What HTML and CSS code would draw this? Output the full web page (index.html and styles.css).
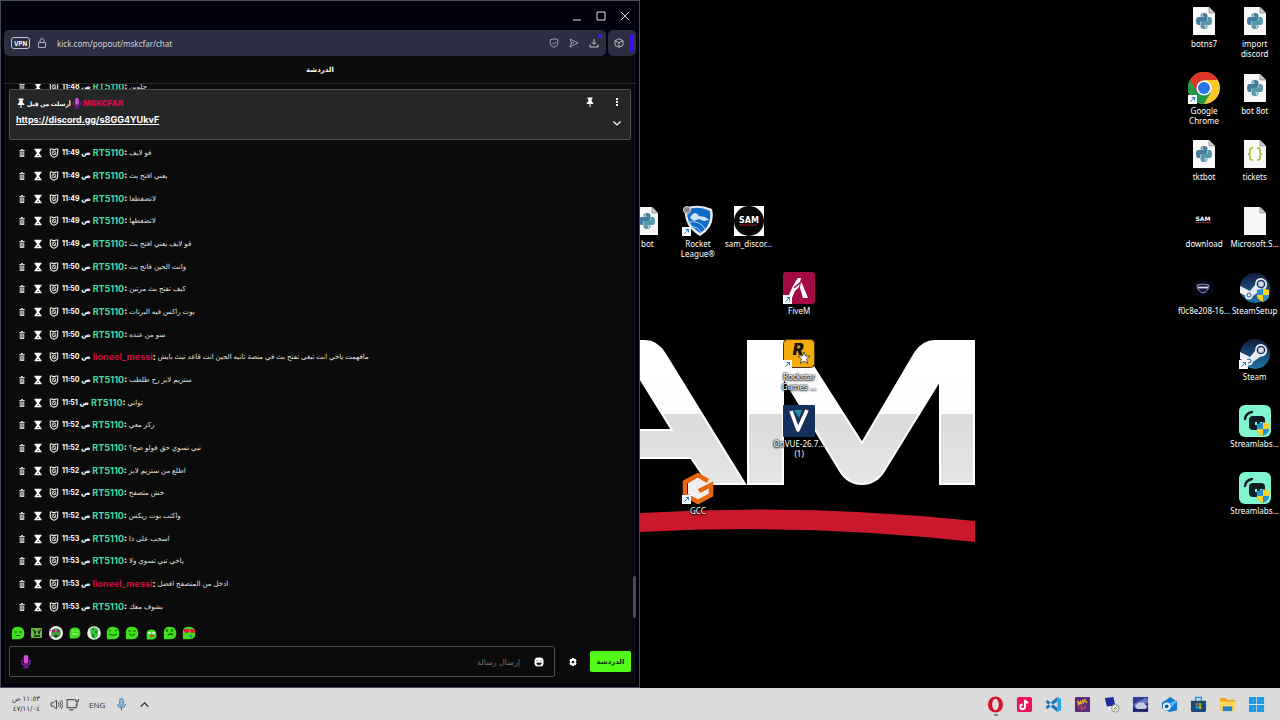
FILE: index.html
```
<!DOCTYPE html>
<html lang="ar">
<head>
    <meta charset="UTF-8">
    <meta name="viewport" content="width=device-width, initial-scale=1.0">
    <title>الدردشة</title>
    <link rel="stylesheet" href="styles.css">
</head>
<body>
    <svg class="defs" aria-hidden="true">
        <symbol id="trash" viewBox="0 0 10 10"><path d="M2.2 2h5.6v1.1H2.2zM4 1h2v1H4zM2.7 3.6h4.6V9H2.7z" fill="#c9c9c9"/><path d="M3.4 5h3.2M3.4 6.8h3.2" stroke="#333" stroke-width=".7"/></symbol>
        <symbol id="glass" viewBox="0 0 10 10"><path d="M1.5.8h7v1.4h-.8Q7.500 4 5.900 5 7.500 6 7.700 7.800h.8v1.400h-7V7.800h.8Q2.500 6 4.100 5 2.500 4 2.300 2.200h-.8z" fill="#fff"/><path d="M4 8l1-1.400L6 8z" fill="#222"/></symbol>
        <symbol id="ban" viewBox="0 0 10 10"><path d="M1.300 1h2l.6.6h2.200l.6-.6h2v4.200Q8.700 7.900 5 9.300 1.300 7.900 1.300 5.200z" fill="none" stroke="#eee" stroke-width="1.100"/><circle cx="5" cy="4.900" r="1.900" fill="none" stroke="#eee" stroke-width=".9"/><path d="M3.700 3.600l2.600 2.600" stroke="#eee" stroke-width=".8"/></symbol>
        <symbol id="pin" viewBox="0 0 10 10"><path d="M2.500.5h5v1.200l-.8.3v2.500L8.300 6v1H5.500v3h-1V7H1.700V6l1.600-1.500V2l-.8-.3z" fill="#fff"/></symbol>
        <symbol id="mic" viewBox="0 0 12 16"><path d="M1.500 6v2q0 4 4.500 4t4.500-4V6M6 12v3M3 14.500h6" fill="none" stroke="#7d1aa8" stroke-width="1.600"/><rect x="3.500" y="1" width="5" height="9.500" rx="2.500" fill="#d848e0"/></symbol>
        <symbol id="arrow" viewBox="0 0 10 10"><path d="M0 0h10v10H0z" fill="#fff"/><path d="M2.500 7.500L7 3M4 2.700h3.300V6" fill="none" stroke="#1976c5" stroke-width="1.100"/></symbol>
        <symbol id="shield" viewBox="0 0 16 16"><path d="M8 0q3 2 7 2.200V8q0 5-7 8z" fill="#fbd21f"/><path d="M8 0Q5 2 1 2.200V8q0 5 7 8z" fill="#2791d0"/><path d="M8 8h7q0 5-7 8z" fill="#2791d0"/><path d="M1 8h7v8Q1 13 1 8z" fill="#fbd21f"/></symbol>
        <symbol id="file" viewBox="0 0 24 30"><path d="M1 1h16l6 6v22H1z" fill="#f8f8f8"/><path d="M17 1v6h6z" fill="#c9cdd2" stroke="#777" stroke-width=".6"/></symbol>
        <symbol id="snake" viewBox="0 0 16 16"><path d="M8 0q3.500 0 3.500 2.500V6q0 2-2 2h-3Q4 8 4 10.500V12H2.500Q0 12 0 8t2.500-4H8v-.6H4.500V2.500Q4.500 0 8 0z" fill="#427d9c"/><path d="M8 16q-3.500 0-3.500-2.500V10q0-2 2-2h3Q12 8 12 5.500V4h1.500Q16 4 16 8t-2.500 4H8v.6h3.500v.9Q11.500 16 8 16z" fill="#5797ae"/><circle cx="6.300" cy="2" r=".8" fill="#fff"/><circle cx="9.700" cy="14" r=".8" fill="#fff"/></symbol>
        <symbol id="pyfile" viewBox="0 0 32 32"><use href="#file" x="4" y="1" width="24" height="30"/><use href="#snake" x="8" y="8" width="16" height="16"/></symbol>
        <symbol id="streamlabs" viewBox="0 0 32 32"><rect width="32" height="32" rx="6" fill="#80f5d2"/><path d="M6 14q1-6 7-7" fill="none" stroke="#111c23" stroke-width="2.300" stroke-linecap="round"/><rect x="10" y="11" width="16" height="14" rx="4" fill="#111c23"/><path d="M17 17v3M22 17v3" stroke="#80f5d2" stroke-width="2"/><use href="#shield" x="17" y="17" width="14" height="14"/></symbol>
        <symbol id="steam" viewBox="0 0 32 32"><circle cx="16" cy="16" r="15" fill="url(#steamBlue)"/><path d="M1 14l10 5 5-6q0-7 6-7 6 1 6 6.500T21 19l-7 5q-1 4-5 3.500-3-1-3-4L1 21z" fill="#e9edf3"/><circle cx="22" cy="12" r="3.600" fill="#d5dae3" stroke="#23335f" stroke-width="1.500"/><circle cx="10" cy="23" r="2" fill="none" stroke="#2b5b8d"/></symbol>
        <symbol id="blob" viewBox="0 0 14 14"><path d="M.8 6Q1 .7 7 .7T13.300 7 7 13.300H1.200Q.6 10 .8 6z" fill="#3fe01c"/></symbol>
        <linearGradient id="steamBlue" x1="0" y1="0" x2="0" y2="1"><stop offset="0" stop-color="#151a3d"/><stop offset="1" stop-color="#1c75a8"/></linearGradient>
    </svg>

    <main class="desktop">
        <section class="window">
            <div class="titlebar">
                <button aria-label="تصغير"><svg viewBox="0 0 10 10"><path d="M1 9h8" stroke="#ddd"/></svg></button>
                <button aria-label="تكبير"><svg viewBox="0 0 10 10"><path d="M1 1h8v8H1z" fill="none" stroke="#ddd"/></svg></button>
                <button aria-label="إغلاق"><svg viewBox="0 0 10 10"><path d="M1 1l8 8M9 1L1 9" stroke="#ddd"/></svg></button>
            </div>
            <div class="toolbar">
                <div class="address">
                    <button class="vpn">VPN</button>
                    <svg class="lock" viewBox="0 0 10 10"><path d="M1.500 4.500h7v5h-7zM3 4.500V3q0-2.500 2-2.500T7 3v1.500" fill="none" stroke="#b9bbc8" stroke-width=".9"/></svg>
                    <input class="url" aria-label="العنوان" value="kick.com/popout/mskcfar/chat">
                    <button aria-label="الحماية"><svg viewBox="0 0 10 10"><path d="M5 .8l3.800 1V5Q8.800 8 5 9.400 1.200 8 1.200 5V1.800zM3.200 4.800l1.400 1.400L7 3.800" fill="none" stroke="#b9bbc8" stroke-width=".8"/></svg></button>
                    <button aria-label="إرسال"><svg viewBox="0 0 10 10"><path d="M1 1l8 4-8 4 1.500-4zM2.500 5H5" fill="none" stroke="#b9bbc8" stroke-width=".8"/></svg></button>
                    <button class="downloads" aria-label="التنزيلات"><svg viewBox="0 0 10 10"><path d="M5 1v5M3 4.300l2 2 2-2M1 6.500V9h8V6.500" fill="none" stroke="#d5d6df" stroke-width=".9"/></svg></button>
                </div>
                <button class="cube" aria-label="الإضافات"><svg viewBox="0 0 10 10"><path d="M5 .7l4 2v4.600l-4 2-4-2V2.700zM1 2.700l4 2 4-2M5 4.700v4.600" fill="none" stroke="#d5d6df" stroke-width=".8"/></svg></button>
            </div>

            <div class="chat">
                <h1 class="chat-title">الدردشة</h1>
                <div class="clipped">
                    <div class="message"><svg><use href="#trash"/></svg><svg><use href="#glass"/></svg><svg><use href="#ban"/></svg><time>11:48 ص</time><b>RT5110<i>:</i></b><bdi>حلوين</bdi></div>
                </div>
                <div class="pinned">
                    <div class="pinned-body">
                        <div class="pinned-by"><svg><use href="#pin"/></svg><bdi>أرسلت من قِبل</bdi><svg class="mic"><use href="#mic"/></svg><b>MSKCFAR</b></div>
                        <a href="https://discord.gg/s8GG4YUkvF">https://discord.gg/s8GG4YUkvF</a>
                    </div>
                    <div class="pinned-actions">
                        <button aria-label="إلغاء التثبيت"><svg><use href="#pin"/></svg></button>
                        <button aria-label="المزيد"><svg viewBox="0 0 10 10"><path d="M4 1h2v2H4zM4 4h2v2H4zM4 7h2v2H4z" fill="#fff"/></svg></button>
                        <button class="expand" aria-label="توسيع"><svg viewBox="0 0 10 10"><path d="M1.500 3.500L5 7l3.500-3.500" fill="none" stroke="#fff" stroke-width="1.200"/></svg></button>
                    </div>
                </div>

                <div class="messages">
                    <div class="message"><svg><use href="#trash"/></svg><svg><use href="#glass"/></svg><svg><use href="#ban"/></svg><time>11:49 ص</time><b>RT5110<i>:</i></b><bdi>قو لايف</bdi></div>
                    <div class="message"><svg><use href="#trash"/></svg><svg><use href="#glass"/></svg><svg><use href="#ban"/></svg><time>11:49 ص</time><b>RT5110<i>:</i></b><bdi>يعني افتح بث</bdi></div>
                    <div class="message"><svg><use href="#trash"/></svg><svg><use href="#glass"/></svg><svg><use href="#ban"/></svg><time>11:49 ص</time><b>RT5110<i>:</i></b><bdi>لاتضغطعا</bdi></div>
                    <div class="message"><svg><use href="#trash"/></svg><svg><use href="#glass"/></svg><svg><use href="#ban"/></svg><time>11:49 ص</time><b>RT5110<i>:</i></b><bdi>لاتضغطها</bdi></div>
                    <div class="message"><svg><use href="#trash"/></svg><svg><use href="#glass"/></svg><svg><use href="#ban"/></svg><time>11:49 ص</time><b>RT5110<i>:</i></b><bdi>قو لايف يعني افتح بث</bdi></div>
                    <div class="message"><svg><use href="#trash"/></svg><svg><use href="#glass"/></svg><svg><use href="#ban"/></svg><time>11:50 ص</time><b>RT5110<i>:</i></b><bdi>وانت الحين فاتح بث</bdi></div>
                    <div class="message"><svg><use href="#trash"/></svg><svg><use href="#glass"/></svg><svg><use href="#ban"/></svg><time>11:50 ص</time><b>RT5110<i>:</i></b><bdi>كيف تفتح بث مرتين</bdi></div>
                    <div class="message"><svg><use href="#trash"/></svg><svg><use href="#glass"/></svg><svg><use href="#ban"/></svg><time>11:50 ص</time><b>RT5110<i>:</i></b><bdi>بوت راكس فيه البرتات</bdi></div>
                    <div class="message"><svg><use href="#trash"/></svg><svg><use href="#glass"/></svg><svg><use href="#ban"/></svg><time>11:50 ص</time><b>RT5110<i>:</i></b><bdi>سو من عنده</bdi></div>
                    <div class="message"><svg><use href="#trash"/></svg><svg><use href="#glass"/></svg><svg><use href="#ban"/></svg><time>11:50 ص</time><b class="red">lioneel_messi<i>:</i></b><bdi>مافهمت ياخي انت تبغى تفتح بث في منصة ثانيه الحين انت قاعد تبث بايش</bdi></div>
                    <div class="message"><svg><use href="#trash"/></svg><svg><use href="#glass"/></svg><svg><use href="#ban"/></svg><time>11:50 ص</time><b>RT5110<i>:</i></b><bdi>ستريم لابز رح طلطب</bdi></div>
                    <div class="message"><svg><use href="#trash"/></svg><svg><use href="#glass"/></svg><svg><use href="#ban"/></svg><time>11:51 ص</time><b>RT5110<i>:</i></b><bdi>ثواني</bdi></div>
                    <div class="message"><svg><use href="#trash"/></svg><svg><use href="#glass"/></svg><svg><use href="#ban"/></svg><time>11:52 ص</time><b>RT5110<i>:</i></b><bdi>ركز معي</bdi></div>
                    <div class="message"><svg><use href="#trash"/></svg><svg><use href="#glass"/></svg><svg><use href="#ban"/></svg><time>11:52 ص</time><b>RT5110<i>:</i></b><bdi>تبي تسوي حق فولو صح؟</bdi></div>
                    <div class="message"><svg><use href="#trash"/></svg><svg><use href="#glass"/></svg><svg><use href="#ban"/></svg><time>11:52 ص</time><b>RT5110<i>:</i></b><bdi>اطلع من ستريم لابز</bdi></div>
                    <div class="message"><svg><use href="#trash"/></svg><svg><use href="#glass"/></svg><svg><use href="#ban"/></svg><time>11:52 ص</time><b>RT5110<i>:</i></b><bdi>خش متصفح</bdi></div>
                    <div class="message"><svg><use href="#trash"/></svg><svg><use href="#glass"/></svg><svg><use href="#ban"/></svg><time>11:52 ص</time><b>RT5110<i>:</i></b><bdi>واكتب بوت ريكس</bdi></div>
                    <div class="message"><svg><use href="#trash"/></svg><svg><use href="#glass"/></svg><svg><use href="#ban"/></svg><time>11:53 ص</time><b>RT5110<i>:</i></b><bdi>اسحب على ذا</bdi></div>
                    <div class="message"><svg><use href="#trash"/></svg><svg><use href="#glass"/></svg><svg><use href="#ban"/></svg><time>11:53 ص</time><b>RT5110<i>:</i></b><bdi>ياخي تبي تسوي ولا</bdi></div>
                    <div class="message"><svg><use href="#trash"/></svg><svg><use href="#glass"/></svg><svg><use href="#ban"/></svg><time>11:53 ص</time><b class="red">lioneel_messi<i>:</i></b><bdi>ادخل من المتصفح افضل</bdi></div>
                    <div class="message"><svg><use href="#trash"/></svg><svg><use href="#glass"/></svg><svg><use href="#ban"/></svg><time>11:53 ص</time><b>RT5110<i>:</i></b><bdi>بشوف معك</bdi></div>
                    <span class="thumb"></span>
                </div>

                <div class="emotes">
                    <button aria-label="emote"><svg viewBox="0 0 14 14"><use href="#blob"/><path d="M3 6h3M8 6h3M5 9.500h4" stroke="#145c0a"/></svg></button>
                    <button aria-label="emote"><svg viewBox="0 0 14 14"><rect x="1" y="2" width="11" height="10" rx="1" fill="#67b743"/><path d="M3 4l3 2M11 4L8 6M4 7h2M8 7h2M4 10h6" stroke="#10250a" stroke-width="1.400"/></svg></button>
                    <button aria-label="emote"><svg viewBox="0 0 14 14"><circle cx="7" cy="7" r="7" fill="#eee"/><circle cx="7" cy="7" r="4.800" fill="#38a737"/><path d="M3 5h3M8 5h3" stroke="#c2188e" stroke-width="2.400"/><circle cx="7" cy="10" r="1.500" fill="#333"/><path d="M0 3l2 2M0 11l3-1" stroke="#d52a9c"/></svg></button>
                    <button aria-label="emote"><svg viewBox="0 0 14 14"><use href="#blob" x="1" y="1" width="12" height="12"/><path d="M4 5h2M8 5h2M4 8h6" stroke="#bff0ae"/></svg></button>
                    <button aria-label="emote"><svg viewBox="0 0 14 14"><circle cx="7" cy="7" r="6.800" fill="#eee"/><path d="M3 3q4-3 8 0v7l-3 3-4-3z" fill="#35c83b"/><path d="M6 2v2M9 5v2M6 8v4" stroke="#0d3d0d"/></svg></button>
                    <button aria-label="emote"><svg viewBox="0 0 14 14"><use href="#blob"/><path d="M3 4l2 1M9 5l2-1M3 8q4 3 8 0" fill="none" stroke="#145c0a"/></svg></button>
                    <button aria-label="emote"><svg viewBox="0 0 14 14"><use href="#blob"/><path d="M3 5h3M8 5h3M4 8q3 3 6 0" fill="none" stroke="#145c0a"/></svg></button>
                    <button aria-label="emote"><svg viewBox="0 0 14 14"><use href="#blob" x="2" y="3" width="11" height="11"/><path d="M4 7h3M8 7h3" stroke="#fff" stroke-width="1.500"/><path d="M6 10h4" stroke="#c22" stroke-width="1.500"/></svg></button>
                    <button aria-label="emote"><svg viewBox="0 0 14 14"><use href="#blob"/><path d="M4 3v3M9 3v3M5 9q3-2 5 0" fill="none" stroke="#145c0a" stroke-width="1.300"/></svg></button>
                    <button aria-label="emote"><svg viewBox="0 0 14 14"><use href="#blob"/><path d="M2 3h5v3l-2 1.500L2 6zM8 3h5v3l-2 1.500L8 6z" fill="#e2222f"/><path d="M7 9h3v4z" fill="#3a76c4"/></svg></button>
                </div>

                <form class="composer">
                    <div class="field">
                        <svg class="mic"><use href="#mic"/></svg>
                        <input dir="rtl" aria-label="إرسال رسالة" placeholder="إرسال رسالة">
                        <button type="button" aria-label="الرموز"><svg viewBox="0 0 10 10"><rect x=".5" y=".5" width="9" height="9" rx="3.500" fill="#fff"/><path d="M3 3v1.300M7 3v1.300M2.700 6h4.600Q7 8 5 8T2.700 6z" fill="#111" stroke="#111" stroke-width=".7"/></svg></button>
                    </div>
                    <button class="gear" type="button" aria-label="الإعدادات"><svg viewBox="0 0 10 10"><path d="M4 1h2l.3 1.300 1.300-.5 1 1.700L7.700 5l.9 1.500-1 1.700-1.300-.5L6 9H4l-.3-1.300-1.300.5-1-1.700L2.300 5l-.9-1.500 1-1.700 1.300.5z" fill="#fff"/><circle cx="5" cy="5" r="1.300" fill="#111"/></svg></button>
                    <button class="send" type="button">الدردشة</button>
                </form>
            </div>
        </section>

        <section class="screen" dir="ltr">
            <svg class="wallpaper" viewBox="640 0 640 688" preserveAspectRatio="xMinYMid slice" aria-hidden="true">
                <defs><linearGradient id="metal" gradientUnits="userSpaceOnUse" x1="0" y1="340" x2="0" y2="485"><stop offset="0" stop-color="#fff"/><stop offset=".51" stop-color="#fdfdfd"/><stop offset=".51" stop-color="#d9dbdc"/><stop offset="1" stop-color="#e4e5e6"/></linearGradient></defs>
                <g fill="url(#metal)" stroke="#fff" stroke-width="2">
                    <path d="M636 341h9q12 0 20 13l80 130h-36l-18-26h-55v-28h36l-36-58z"/>
                    <path d="M748 341h42q7 0 12 8l60 94 53-90q8-12 20-12h39v143h-34V380l-56 91q-8 13-22 13t-22-13l-57-94v107h-35z"/>
                </g>
                <path d="M640 513Q807 503 975 521v21Q807 523 640 532z" fill="#cb192c"/>
            </svg>
            <div class="icons">
                <a href="#" class="icon c1 r4"><svg><use href="#pyfile"/></svg><span>bot</span></a>
                <a href="#" class="icon c2 r4"><svg viewBox="0 0 32 32"><path d="M3 3Q16-2 30 4q4 18-12 27Q1 21 3 3z" fill="#e5edf8"/><path d="M5 5q11-5 23 1 2 15-10 22Q4 19 5 5z" fill="#116bc8"/><path d="M8 13q2-5 6-5l3 3 6 1 4 3-5 1-5-2-5 2z" fill="#cde4fb"/><path d="M6 17q12-2 17 7M9 22q6-1 10 5" fill="none" stroke="#a4cef5"/><circle cx="5" cy="5" r="3.500" fill="#888" stroke="#ddd"/><use href="#arrow" y="22" width="9" height="9"/></svg><span>Rocket<br>League®</span></a>
                <a href="#" class="icon c3 r4"><svg viewBox="0 0 32 32"><path d="M1 1h30v30H1z" fill="#fff"/><circle cx="16" cy="16" r="15" fill="#070707"/><text x="16" y="18" class="badge-text">SAM</text><path d="M6 20h18" stroke="#a21825"/></svg><span>sam_discor...</span></a>
                <a href="#" class="icon c4 r5"><svg viewBox="0 0 32 32"><rect width="32" height="32" rx="3" fill="#a20b43"/><path d="M15 6h3l-2 9-4 4-3 7H5q4-12 10-20zM18 9l7 17h-5l-3-10z" fill="#fff"/><path d="M11 16l8-7" stroke="#a20b43" stroke-width="1.500"/><use href="#arrow" y="23" width="9" height="9"/></svg><span>FiveM</span></a>
                <a href="#" class="icon c4 r6"><svg viewBox="0 0 32 32"><rect x=".5" y="1.500" width="31" height="28" rx="4" fill="#f5ab0b" stroke="#49340b"/><text x="15" y="17" class="rock-text">R</text><path d="M21 14l1.500 4 4.500.1-3.500 2.900 1.300 4.500L21 23l-3.800 2.500 1.300-4.500-3.500-2.900 4.500-.1z" fill="#fff" stroke="#333" stroke-width=".8"/><use href="#arrow" y="22" width="9" height="9"/></svg><span>Rockstar<br>Games ...</span></a>
                <a href="#" class="icon c4 r7"><svg viewBox="0 0 32 32"><rect width="32" height="32" rx="1" fill="#14315b"/><path d="M8 6l7 19L24 5" fill="none" stroke="#fff" stroke-width="3.600" stroke-linejoin="round"/><path d="M11 5h8l-3 8z" fill="#278ea4"/></svg><span>OnVUE-26.7...<br>(1)</span></a>
                <a href="#" class="icon c2 r8"><svg viewBox="0 0 32 32"><path d="M16 5l11 6v12l-11 6-10-6V11z" fill="#eee"/><path d="M26 9L16 3 3 10v13l13 7 13-7V13l-12 6" fill="none" stroke="#e96512" stroke-width="4.500"/><use href="#arrow" y="23" width="9" height="9"/></svg><span>GCC</span></a>

                <a href="#" class="icon c12 r1"><svg><use href="#pyfile"/></svg><span>botns7</span></a>
                <a href="#" class="icon c13 r1"><svg><use href="#pyfile"/></svg><span>import<br>discord</span></a>
                <a href="#" class="icon c12 r2"><svg viewBox="0 0 32 32"><circle cx="16" cy="16" r="16" fill="#ffc928"/><path d="M16 16L2.100 8A16 16 0 0 0 16 32l7-12z" fill="#22994a"/><path d="M2.100 8A16 16 0 0 1 29.900 8H16l-7 12z" fill="#df352b"/><circle cx="16" cy="16" r="7.500" fill="#fff"/><circle cx="16" cy="16" r="6" fill="#2876ea"/><use href="#arrow" y="23" width="9" height="9"/></svg><span>Google<br>Chrome</span></a>
                <a href="#" class="icon c13 r2"><svg><use href="#pyfile"/></svg><span>bot 8ot</span></a>
                <a href="#" class="icon c12 r3"><svg><use href="#pyfile"/></svg><span>tktbot</span></a>
                <a href="#" class="icon c13 r3"><svg viewBox="0 0 32 32"><use href="#file" x="4" y="1" width="24" height="30"/><path d="M14 10h-1q-2 0-2 2v2q0 2-2 2 2 0 2 2v2q0 2 2 2h1M18 10h1q2 0 2 2v2q0 2 2 2-2 0-2 2v2q0 2-2 2h-1" fill="none" stroke="#9dbb35" stroke-width="1.600"/></svg><span>tickets</span></a>
                <a href="#" class="icon c12 r4"><svg viewBox="0 0 32 32"><text x="15" y="16" class="tiny-text">SAM</text><path d="M8 17.500h15" stroke="#8d1d28"/></svg><span>download</span></a>
                <a href="#" class="icon c13 r4"><svg viewBox="0 0 32 32"><use href="#file" x="4" y="1" width="24" height="30"/></svg><span>Microsoft.S...</span></a>
                <a href="#" class="icon c12 r5"><svg viewBox="0 0 32 32"><ellipse cx="15" cy="16" rx="12" ry="9" fill="#060816"/><path d="M9 13q6-2 12 0 0 6-6 8-6-2-6-8z" fill="#11173c" stroke="#9599c5"/><path d="M10 15.500h10" stroke="#dadcf5" stroke-width="1.800"/></svg><span>f0c8e208-16...</span></a>
                <a href="#" class="icon c13 r5"><svg viewBox="0 0 32 32"><use href="#steam"/><use href="#shield" x="17" y="16" width="14" height="14"/></svg><span>SteamSetup</span></a>
                <a href="#" class="icon c13 r6"><svg viewBox="0 0 32 32"><use href="#steam"/><use href="#arrow" y="22" width="9" height="9"/></svg><span>Steam</span></a>
                <a href="#" class="icon c13 r7"><svg><use href="#streamlabs"/></svg><span>Streamlabs...</span></a>
                <a href="#" class="icon c13 r8"><svg><use href="#streamlabs"/></svg><span>Streamlabs...</span></a>
            </div>
        </section>
    </main>

    <footer class="taskbar">
        <div class="clock" dir="rtl"><span>١١:٥٣ ص</span><span>٤٧/١١/٠٤</span></div>
        <div class="tray">
            <button aria-label="الصوت"><svg viewBox="0 0 12 12"><path d="M1 4.500h2L6 2v8L3 7.500H1zM7.500 4q1.500 2 0 4M9 3q2.500 3 0 6M10.500 2q3 4 0 8" fill="none" stroke="#333" stroke-width=".8"/></svg></button>
            <button aria-label="الشبكة"><svg viewBox="0 0 12 12"><path d="M8 1.500H1V9h8.500V6M3 11h4M9 1v2h2.500V1M10.200 3v4" fill="none" stroke="#333" stroke-width=".9"/></svg></button>
        </div>
        <button class="lang">ENG</button>
        <button aria-label="الميكروفون"><svg viewBox="0 0 12 12"><rect x="4.300" y=".5" width="3.400" height="7" rx="1.700" fill="#96b8dc" stroke="#346faa" stroke-width=".7"/><path d="M2.500 5.500q0 3.500 3.500 3.500t3.500-3.500M6 9v2.500" fill="none" stroke="#346faa" stroke-width=".9"/></svg></button>
        <button aria-label="الرموز المخفية"><svg viewBox="0 0 12 12"><path d="M2.500 8L6 4.500 9.500 8" fill="none" stroke="#222" stroke-width="1.100"/></svg></button>
        <nav class="apps">
            <button class="active" aria-label="Opera"><svg viewBox="0 0 18 18"><ellipse cx="9" cy="9" rx="8" ry="8.500" fill="#d3142a"/><ellipse cx="9" cy="9" rx="3.500" ry="6" fill="#dcdcdc"/></svg></button>
            <button aria-label="TikTok"><svg viewBox="0 0 18 18"><rect x="1" y="1" width="16" height="16" rx="2" fill="#ed1658"/><path d="M9.500 4v7.500A2.500 2.500 0 1 1 7 9M9.500 4q.5 3 3.500 3" fill="none" stroke="#fff" stroke-width="2"/></svg></button>
            <button aria-label="VS Code"><svg viewBox="0 0 18 18"><path d="M1 5.500l1.500-1.200L13 12.500V17L1 7zM1 12.500l1.500 1.200L13 5.500V1L1 11z" fill="#1678ba"/><path d="M13 1l4 2v12l-4 2z" fill="#32a5e6"/></svg></button>
            <button aria-label="لعبة"><svg viewBox="0 0 18 18"><rect x="1" y="1" width="16" height="16" rx="1" fill="#5b2b78"/><path d="M4 5l1 4 2-3 1 3M9 4l1 4M12 3l-1 2 3 2" fill="none" stroke="#e9ba32" stroke-width="1.500"/><path d="M5 13l3-2v3l4-3v3" fill="none" stroke="#c13d5d" stroke-width="1.500"/></svg></button>
            <button aria-label="سطح المكتب البعيد"><svg viewBox="0 0 18 18"><path d="M2 2l9-1 2 9-9 1z" fill="#1c2b9d"/><path d="M5 12h6v3H5z" fill="#ececec"/><circle cx="13" cy="13" r="4" fill="#f3f3f3" stroke="#888"/><path d="M11 14l4-3M12 15l3-2" stroke="#5c9a55"/></svg></button>
            <button aria-label="سيارات"><svg viewBox="0 0 18 18"><rect x="1" y="1" width="16" height="16" fill="#313a94"/><path d="M1 9L14 2l3 1v4L5 13z" fill="#6672b8"/><path d="M3 11l4-4h5l4 4-2 3H6z" fill="#c5cbe6"/><path d="M1 15h16" stroke="#191f50" stroke-width="2"/></svg></button>
            <button aria-label="أدوات"><svg viewBox="0 0 18 18"><path d="M1 7l9-6 7 5v9l-8 2-8-4z" fill="#1679d2"/><path d="M7 9l9-5v3L8 15z" fill="#59b8f4"/><circle cx="6" cy="11" r="4" fill="#e8f5ff"/><circle cx="6" cy="11" r="2" fill="#1557a2"/></svg></button>
            <button aria-label="المتجر"><svg viewBox="0 0 18 18"><path d="M6 5V1.500h6V5" fill="none" stroke="#2490d8" stroke-width="1.500"/><path d="M1 5h16v10q0 2-2 2H3q-2 0-2-2z" fill="#174a76"/><path d="M6 7.500h2.700v2.700H6z" fill="#f25022"/><path d="M9.300 7.500H12v2.700H9.300z" fill="#7fba00"/><path d="M6 10.800h2.700v2.700H6z" fill="#00a4ef"/><path d="M9.300 10.800H12v2.700H9.300z" fill="#ffb900"/></svg></button>
            <button aria-label="الملفات"><svg viewBox="0 0 18 18"><path d="M1 2h6l2 2h8v12H1z" fill="#eaa91d"/><path d="M1 6h16v10H1z" fill="#ffd55a"/><path d="M4 11h10v5H4z" fill="#2584c9"/></svg></button>
            <button aria-label="ابدأ"><svg viewBox="0 0 18 18"><path d="M1 1h7.600v7.600H1zM9.400 1H17v7.600H9.400zM1 9.400h7.600V17H1zM9.400 9.400H17V17H9.400z" fill="#1e9be2"/></svg></button>
        </nav>
    </footer>
</body>
</html>
```
FILE: styles.css
```
* {
    box-sizing: border-box;
}

body {
    margin: 0;
    height: 100vh;
    display: flex;
    flex-direction: column;
    overflow: hidden;
    background: #000;
    color: #fff;
    font-family: Inter, "DejaVu Sans", sans-serif;
    font-size: 9px;
}

svg {
    display: block;
    flex: none;
}

button {
    display: flex;
    align-items: center;
    justify-content: center;
    padding: 0;
    border: 0;
    background: none;
    color: inherit;
    font: inherit;
    cursor: pointer;
}

input {
    min-width: 0;
    flex: 1;
    padding: 0;
    border: 0;
    outline: 0;
    background: none;
    font: inherit;
}

.defs {
    position: absolute;
    width: 0;
    height: 0;
}

.desktop {
    flex: 1;
    min-height: 0;
    display: grid;
    grid-template-columns: 1fr 1fr;
}

/* browser window */
.window {
    z-index: 1;
    min-height: 0;
    display: flex;
    flex-direction: column;
    padding: 0 3px 3px;
    border: 1px solid #464956;
    background: #02020f;
}

.titlebar {
    height: 29px;
    display: flex;
    align-items: center;
    justify-content: flex-end;
    gap: 14px;
    padding-right: 6px;
}

.titlebar svg {
    width: 10px;
    height: 10px;
}

.toolbar {
    height: 26px;
    display: flex;
    gap: 2px;
}

.address {
    flex: 1;
    display: flex;
    align-items: center;
    gap: 10px;
    padding: 0 7px;
    border-radius: 5px;
    background: #2c2e41;
}

.toolbar svg {
    width: 10px;
    height: 10px;
}

.vpn {
    width: 19px;
    height: 12px;
    margin-right: -3px;
    border: 1px solid #c4c6d1;
    border-radius: 3px;
    color: #fff;
    font-size: 6px;
    font-weight: 700;
}

.url {
    color: #d3d4de;
    font-family: "Noto Sans", sans-serif;
    font-size: 8px;
}

.downloads {
    position: relative;
}

.downloads::after {
    content: "";
    position: absolute;
    top: -4px;
    right: -3px;
    width: 4px;
    height: 4px;
    border-radius: 2px;
    background: #4a12ff;
}

.cube {
    width: 28px;
    gap: 6px;
    padding-left: 3px;
    border-radius: 5px;
    background: #2c2e41;
}

.cube::after {
    content: "";
    width: 4px;
    height: 18px;
    border-radius: 2px;
    background: #420ff0;
}

/* chat */
.chat {
    flex: 1;
    min-height: 0;
    display: flex;
    flex-direction: column;
    background: #0a0b0a;
}

.chat-title {
    height: 28px;
    margin: 0;
    border-bottom: 1px solid #272a27;
    font-size: 7px;
    line-height: 28px;
    text-align: center;
}

.clipped {
    height: 5px;
    display: flex;
    align-items: center;
    overflow: hidden;
}

.pinned {
    height: 51px;
    display: flex;
    justify-content: space-between;
    margin: 0 5px;
    padding: 7px 6px;
    border: 1px solid #4b4e4b;
    border-radius: 2px;
    background: #242628;
}

.pinned svg {
    width: 10px;
    height: 10px;
}

.pinned-by {
    height: 12px;
    display: flex;
    align-items: center;
    gap: 1px;
    font-size: 8px;
    font-weight: 700;
}

.pinned-by bdi {
    font-size: 6px;
}

.pinned-by b {
    color: #d20a45;
}

.pinned .mic {
    width: 10px;
    height: 12px;
}

.pinned a {
    color: #fff;
    font-size: 9px;
    font-weight: 700;
    line-height: 22px;
}

.pinned-actions {
    display: grid;
    grid-template-columns: 14px 14px;
    gap: 11px 13px;
    align-content: start;
}

.expand {
    grid-column: 2;
}

.messages {
    position: relative;
    flex: 1;
    min-height: 0;
    display: grid;
    grid-auto-rows: 1fr;
    padding: 2px 0;
}

.message {
    display: flex;
    align-items: center;
    padding-left: 13px;
    line-height: 12px;
    white-space: nowrap;
}

.message svg {
    width: 10px;
    height: 10px;
    margin-right: 6px;
}

.message time {
    margin: 0 2px 0 -3px;
    font-size: 7px;
    font-weight: 700;
}

.message b {
    margin-right: 2px;
    color: #46d9a4;
    font-size: 9px;
}

.message i {
    color: #fff;
    font-style: normal;
}

.message .red {
    color: #c90d3b;
}

.message bdi {
    color: #e4e4e4;
    font-size: 7px;
}

.thumb {
    position: absolute;
    right: 0;
    bottom: 2px;
    width: 3px;
    height: 42px;
    border-radius: 2px;
    background: #4c4d50;
}

.emotes {
    height: 26px;
    display: flex;
    align-items: center;
    gap: 5px;
    padding-left: 7px;
}

.emotes svg {
    width: 14px;
    height: 14px;
}

.composer {
    display: flex;
    align-items: center;
    margin: 0 5px 7px;
}

.field {
    height: 31px;
    flex: 1;
    display: flex;
    align-items: center;
    gap: 14px;
    padding: 0 10px;
    border: 1px solid #4b4d4d;
    border-radius: 2px;
}

.field .mic {
    width: 12px;
    height: 15px;
}

.field input {
    color: #fff;
    font-size: 8px;
}

.field input::placeholder {
    color: #6f7272;
    opacity: 1;
}

.field button svg,
.gear svg {
    width: 10px;
    height: 10px;
}

.gear {
    width: 35px;
}

.send {
    width: 41px;
    height: 21px;
    border-radius: 2px;
    background: #53fc18;
    color: #0b2605;
    font-size: 7px;
    font-weight: 700;
}

/* desktop side */
.screen {
    position: relative;
    min-height: 0;
}

.wallpaper {
    position: absolute;
    width: 100%;
    height: 100%;
}

.icons {
    position: relative;
    height: 100%;
    display: grid;
    grid-template-columns: repeat(13, minmax(0, 1fr));
    grid-template-rows: repeat(10, minmax(0, 1fr));
    margin-left: -18px;
    padding: 5px 0 16px;
}

.icon {
    display: flex;
    flex-direction: column;
    align-items: center;
    gap: 2px;
    color: #fff;
    font-family: "Noto Sans", sans-serif;
    font-size: 8px;
    line-height: 10px;
    text-align: center;
    text-decoration: none;
    text-shadow: 0 0 2px #000, 0 0 2px #000, 0 1px 2px #000;
    white-space: nowrap;
}

.icon svg {
    width: 32px;
    height: 32px;
}

.c1 { grid-column: 1; }
.c2 { grid-column: 2; }
.c3 { grid-column: 3; }
.c4 { grid-column: 4; }
.c12 { grid-column: 12; }
.c13 { grid-column: 13; }
.r1 { grid-row: 1; }
.r2 { grid-row: 2; }
.r3 { grid-row: 3; }
.r4 { grid-row: 4; }
.r5 { grid-row: 5; }
.r6 { grid-row: 6; }
.r7 { grid-row: 7; }
.r8 { grid-row: 8; }

.badge-text,
.tiny-text,
.rock-text {
    fill: #fff;
    font-family: "DejaVu Sans", sans-serif;
    font-size: 8px;
    font-weight: 700;
    text-anchor: middle;
    text-shadow: none;
}

.tiny-text {
    font-size: 6px;
}

.rock-text {
    fill: #111;
    font-family: Inter, sans-serif;
    font-size: 16px;
    font-style: italic;
    font-weight: 900;
}

/* taskbar */
.taskbar {
    height: 32px;
    display: flex;
    align-items: center;
    gap: 10px;
    padding: 0 15px 0 12px;
    background: #dbdbdb;
    color: #333;
}

.taskbar svg {
    width: 13px;
    height: 13px;
}

.clock {
    width: 28px;
    display: flex;
    flex-direction: column;
    font-family: "DejaVu Sans", sans-serif;
    font-size: 7px;
    line-height: 10px;
    white-space: nowrap;
}

.tray {
    display: flex;
    gap: 3px;
}

.lang {
    font-family: "Open Sans", sans-serif;
    font-size: 8px;
}

.apps {
    display: flex;
    gap: 12px;
    margin-left: auto;
}

.apps button {
    position: relative;
}

.apps svg {
    width: 17px;
    height: 17px;
}

.active::after {
    content: "";
    position: absolute;
    bottom: -3px;
    width: 4px;
    height: 2px;
    border-radius: 1px;
    background: #777;
}
```
